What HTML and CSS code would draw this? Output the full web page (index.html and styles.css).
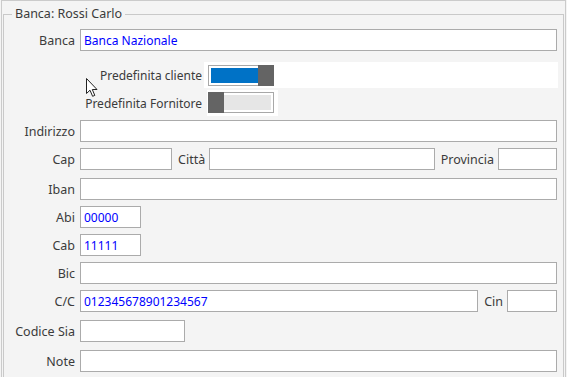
FILE: index.html
```html
<!doctype html>
<html>
<head>
	<meta charset="utf-8">
	<title>Banca - Rossi Carlo</title>
	<link rel="stylesheet" href="styles.css">
</head>
<body>

	<div class="window">
		<fieldset class="group">
			<legend>Banca: Rossi Carlo</legend>

			<div class="row">
				<label class="lbl">Banca</label>
				<input type="text" class="field grow" value="Banca Nazionale" />
			</div>

			<div class="switchrow first">
				<span class="switchlbl">Predefinita cliente</span>
				<div class="switchbox wide">
					<span class="switch on"><span class="fill"></span><span class="knob"></span></span>
				</div>
			</div>

			<div class="switchrow second">
				<span class="switchlbl">Predefinita Fornitore</span>
				<div class="switchbox small">
					<span class="switch off"><span class="knob"></span><span class="fill"></span></span>
				</div>
			</div>

			<div class="row after-switch">
				<label class="lbl">Indirizzo</label>
				<input type="text" class="field grow" value="" />
			</div>

			<div class="row">
				<label class="lbl">Cap</label>
				<input type="text" class="field cap" value="" />
				<label class="inlbl">Città</label>
				<input type="text" class="field grow" value="" />
				<label class="inlbl">Provincia</label>
				<input type="text" class="field prov" value="" />
			</div>

			<div class="row spaced">
				<label class="lbl">Iban</label>
				<input type="text" class="field grow" value="" />
			</div>

			<div class="row">
				<label class="lbl">Abi</label>
				<input type="text" class="field short" value="00000" />
			</div>

			<div class="row">
				<label class="lbl">Cab</label>
				<input type="text" class="field short" value="11111" />
			</div>

			<div class="row">
				<label class="lbl">Bic</label>
				<input type="text" class="field grow" value="" />
			</div>

			<div class="row">
				<label class="lbl">C/C</label>
				<input type="text" class="field grow" value="012345678901234567" />
				<label class="inlbl">Cin</label>
				<input type="text" class="field cin" value="" />
			</div>

			<div class="row spaced">
				<label class="lbl">Codice Sia</label>
				<input type="text" class="field sia" value="" />
			</div>

			<div class="row spaced">
				<label class="lbl">Note</label>
				<input type="text" class="field grow" value="" />
			</div>
		</fieldset>

		<!--mouse pointer left over the form-->
		<svg class="pointer" width="13" height="20" viewBox="0 0 13 20">
			<path d="M0.5 0.5 L0.5 15.5 L4 12.2 L6.6 18.3 L8.8 17.4 L6.3 11.5 L11 11.5 Z" fill="#fff" stroke="#222" stroke-width="1" stroke-linejoin="miter" />
		</svg>
	</div>

</body>
</html>
```

FILE: styles.css
```css
* {margin:0; padding:0; box-sizing:border-box;}
html, body {height:377px; overflow:hidden;}
body {background:#f4f4f4; font:normal 12.5px "Noto Sans","Open Sans",sans-serif; color:#3b3b3b;}

.window {position:relative; margin-left:1px; width:565px; height:377px; border:1px solid #cbcbcb; border-bottom:none; padding:5px 1px 0 1px;}

.group {border:1px solid #c9c9c9; padding:7px 6px 10px 0; min-width:0;}
.group legend {margin-left:8px; padding:0 3px; line-height:16px; color:#3b3b3b;}

.row {display:flex; align-items:center; height:22px; margin-top:6px;}
.row:first-of-type {margin-top:0;}
.row.spaced {margin-top:8px;}
.row.after-switch {margin-top:4px;}

.lbl {width:71px; margin-right:5px; text-align:right; white-space:nowrap;}
.inlbl {margin:0 4px 0 6px; white-space:nowrap;}

.field {height:22px; border:1px solid #ababab; background:#fff; padding:0 3px; font:normal 12px "Noto Sans","Open Sans",sans-serif; color:#0000ff; outline:none;}
.field.grow {flex:1; min-width:0;}
.field.cap {width:92px;}
.field.prov {width:59px;}
.field.short {width:61px;}
.field.cin {width:50px;}
.field.sia {width:105px;}

.switchrow {display:flex; align-items:center; padding-left:76px;}
.switchrow.first {margin-top:11px;}
.switchrow.second {margin-top:2px;}
.switchlbl {width:122px; text-align:right; white-space:nowrap; font-size:12px;}

.switchbox {background:#fff;}
.switchbox.wide {flex:1; margin:0 -1px 0 2px; padding:3px 4px 2px 4px;}
.switchbox.small {margin-left:5px; padding:2px 4px 3px 1px;}

.switch {display:flex; width:66px; height:21px; border:1px solid #a8a8a8; background:#fff;}
.switch .knob {width:16px; background:#646464; margin:-1px 0;}
.switch.on .fill {flex:1; margin:2px 0 2px 2px; background:#0072c6;}
.switch.on .knob {margin-right:-1px;}
.switch.off .fill {flex:1; margin:2px 2px 2px 0; background:#e6e6e6;}
.switch.off .knob {margin-left:-1px;}

.pointer {position:absolute; left:84px; top:77px;}
```
